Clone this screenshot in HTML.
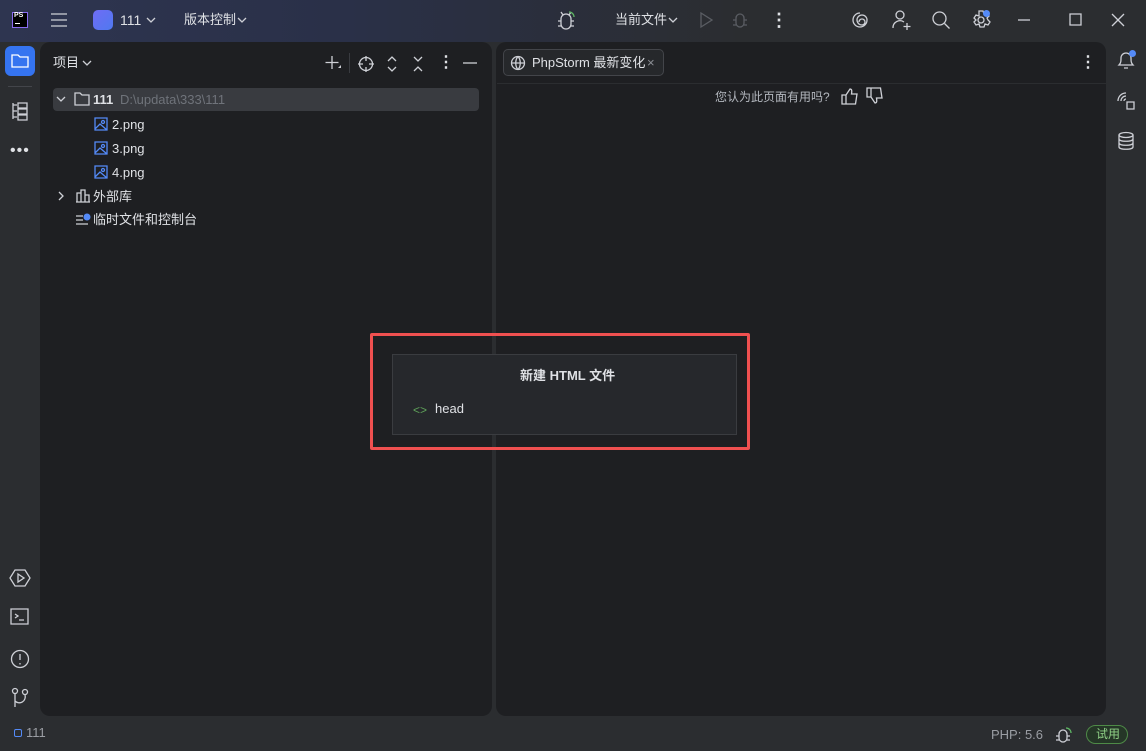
<!DOCTYPE html>
<html><head><meta charset="utf-8"><style>
*{margin:0;padding:0;box-sizing:border-box}
body{width:1146px;height:751px;background:#2b2d30;font-family:"Liberation Sans","Noto Sans CJK SC",sans-serif;color:#dfe1e5;font-size:13px;position:relative;overflow:hidden}
.abs{position:absolute}
#title{left:0;top:0;width:1146px;height:42px;background:linear-gradient(90deg,#2e3550 0%,#2a3048 30%,#2b2d30 65%)}
.panel{background:#1e1f22;border-radius:10px}
svg{position:absolute;fill:none;stroke:#ced0d6;stroke-width:1.3}
.t{position:absolute;white-space:nowrap;line-height:16px}
</style></head><body>
<div id="title" class="abs"></div>
<div class="abs" style="left:12px;top:12px;width:16px;height:16px;background:#000;border:1px solid #8a6cf0"></div>
<div class="t" style="left:14px;top:11px;font-size:7px;line-height:9px;color:#fff;font-weight:bold">PS</div>
<div class="abs" style="left:15px;top:23px;width:5px;height:1px;background:#fff"></div>
<svg style="left:50px;top:12px" width="18" height="16"><path d="M1 2h16M1 8h16M1 14h16"/></svg>
<div class="abs" style="left:93px;top:10px;width:20px;height:20px;border-radius:5px;background:linear-gradient(135deg,#6f6cf5,#4f79f0)"></div>
<div class="t" style="left:120px;top:12px;font-size:14px">111</div>
<svg style="left:146px;top:16px" width="10" height="8"><path d="M1 2l4 4 4-4"/></svg>
<div class="t" style="left:184px;top:12px;font-size:13px">版本控制</div>
<svg style="left:237px;top:16px" width="10" height="8"><path d="M1 2l4 4 4-4"/></svg>
<svg style="left:556px;top:9px" width="20" height="22"><path d="M5 10a5 5 0 0 1 10 0v5a5 5 0 0 1-10 0z M2 12h3M15 12h3M2 17h3M15 17h3M7 6l-2-3M13 6l2-3"/><path d="M13 3a5 5 0 0 1 5 5" stroke="#5fb865"/></svg>
<div class="t" style="left:615px;top:12px">当前文件</div>
<svg style="left:668px;top:16px" width="10" height="8"><path d="M1 2l4 4 4-4"/></svg>
<svg style="left:698px;top:11px" width="16" height="18"><path d="M3 2l11 7-11 7z" stroke="#5a5d63"/></svg>
<svg style="left:731px;top:10px" width="18" height="20"><path d="M5 8a4 4 0 0 1 8 0v5a4 4 0 0 1-8 0zM2 10h3M13 10h3M2 15h3M13 15h3" stroke="#5a5d63"/></svg>
<div class="t" style="left:770px;top:10px;font-size:18px;font-weight:bold;line-height:20px">⋮</div>
<svg style="left:850px;top:10px" width="20" height="20"><path d="M10 3a7 7 0 1 0 7 7 5 5 0 1 0-5 5 3 3 0 1 0-3-3"/></svg>
<svg style="left:891px;top:9px" width="22" height="22"><circle cx="9" cy="6" r="4"/><path d="M2 19a7 7 0 0 1 11-6M16 14v7M12.5 17.5h7"/></svg>
<svg style="left:931px;top:10px" width="20" height="20"><circle cx="8.5" cy="8.5" r="6.5"/><path d="M13.5 13.5l5 5"/></svg>
<svg style="left:970px;top:9px" width="22" height="22"><circle cx="11" cy="11" r="3"/><path d="M9 2h4l1 3 3-1 2 3-2 2 1 2 2 2-2 3-3-1-1 3h-4l-1-3-3 1-2-3 2-2-2-2 2-3 3 1z"/></svg>
<div class="abs" style="left:983px;top:10px;width:7px;height:7px;border-radius:50%;background:#548af7"></div>
<svg style="left:1016px;top:12px" width="16" height="16"><path d="M2 8h12"/></svg>
<svg style="left:1068px;top:12px" width="16" height="16"><path d="M2 2h11v11H2z"/></svg>
<svg style="left:1110px;top:12px" width="16" height="16"><path d="M2 2l12 12M14 2L2 14"/></svg>

<div class="abs" style="left:5px;top:46px;width:30px;height:30px;border-radius:6px;background:#3574f0"></div>
<svg style="left:10px;top:52px;stroke:#fff" width="20" height="18"><path d="M2 3h6l2 2h8v10H2z"/></svg>
<div class="abs" style="left:8px;top:86px;width:24px;height:1px;background:#43454a"></div>
<svg style="left:11px;top:101px" width="18" height="20"><path d="M2 2v16M2 4h4M2 10h4M2 16h4M7 2h9v5H7zM7 8h9v5H7zM7 14h9v5H7z"/></svg>
<div class="t" style="left:10px;top:143px;font-size:16px;letter-spacing:1px">•••</div>
<svg style="left:9px;top:567px" width="22" height="22"><path d="M6 3h10l5 8-5 8H6l-5-8z M9 7l6 4-6 4z"/></svg>
<svg style="left:10px;top:608px" width="20" height="18"><path d="M1 1h17v15H1zM5 6l3 2-3 2M9 12h5"/></svg>
<svg style="left:9px;top:648px" width="22" height="22"><circle cx="11" cy="11" r="8.5"/><path d="M11 6v6M11 15v1.5"/></svg>
<svg style="left:10px;top:687px" width="20" height="22"><circle cx="5" cy="4" r="2.5"/><circle cx="15" cy="5" r="2.5"/><path d="M5 7v13M15 8a6 6 0 0 1-10 6"/></svg>

<div class="abs panel" style="left:40px;top:42px;width:452px;height:674px"></div>
<div class="t" style="left:53px;top:55px;font-size:13px">项目</div>
<svg style="left:82px;top:59px" width="10" height="8"><path d="M1 2l4 4 4-4"/></svg>
<svg style="left:324px;top:54px" width="18" height="18"><path d="M8 2v13M1.5 8.5h13"/><path d="M14 14h3v-3z" fill="#ced0d6" stroke="none"/></svg>
<div class="abs" style="left:349px;top:53px;width:1px;height:20px;background:#393b40"></div>
<svg style="left:357px;top:55px" width="18" height="18"><circle cx="9" cy="9" r="6.5"/><path d="M9 1v5M9 12v5M1 9h5M12 9h5"/></svg>
<svg style="left:385px;top:55px" width="14" height="18"><path d="M3 6l4-4 4 4M3 12l4 4 4-4"/></svg>
<svg style="left:411px;top:55px" width="14" height="18"><path d="M3 2l4 4 4-4M3 16l4-4 4 4"/></svg>
<div class="t" style="left:438px;top:55px;font-size:16px;font-weight:bold">⋮</div>
<svg style="left:462px;top:55px" width="16" height="16"><path d="M1 8h14"/></svg>
<div class="abs" style="left:53px;top:88px;width:426px;height:23px;border-radius:4px;background:#393b40"></div>
<svg style="left:56px;top:95px" width="10" height="8"><path d="M1 2l4 4 4-4"/></svg>
<svg style="left:74px;top:92px" width="16" height="14"><path d="M1 1h5l2 2h7v10H1z"/></svg>
<div class="t" style="left:93px;top:92px;font-weight:bold">111</div>
<div class="t" style="left:120px;top:92px;color:#6f737a">D:\updata\333\111</div>
<svg style="left:94px;top:117px;stroke:#548af7" width="14" height="14"><path d="M1 1h12v12H1zM1 12l5-5 7 6"/><circle cx="9" cy="5" r="1.5"/></svg>
<div class="t" style="left:112px;top:117px">2.png</div>
<svg style="left:94px;top:141px;stroke:#548af7" width="14" height="14"><path d="M1 1h12v12H1zM1 12l5-5 7 6"/><circle cx="9" cy="5" r="1.5"/></svg>
<div class="t" style="left:112px;top:141px">3.png</div>
<svg style="left:94px;top:165px;stroke:#548af7" width="14" height="14"><path d="M1 1h12v12H1zM1 12l5-5 7 6"/><circle cx="9" cy="5" r="1.5"/></svg>
<div class="t" style="left:112px;top:165px">4.png</div>
<svg style="left:57px;top:191px" width="8" height="10"><path d="M2 1l4 4-4 4"/></svg>
<svg style="left:75px;top:189px" width="16" height="14"><path d="M1 13h14M2 13V4h4v9M6 13V1h4v12M10 13V6h4v7"/></svg>
<div class="t" style="left:93px;top:189px">外部库</div>
<svg style="left:75px;top:212px" width="16" height="16"><path d="M1 4h7M1 8h7M1 12h12"/><circle cx="12" cy="5" r="3.5" fill="#548af7" stroke="none"/></svg>
<div class="t" style="left:93px;top:212px">临时文件和控制台</div>

<div class="abs panel" style="left:496px;top:42px;width:610px;height:674px"></div>
<div class="abs" style="left:503px;top:49px;width:161px;height:27px;border:1px solid #43454a;border-radius:5px;background:#26282b"></div>
<svg style="left:510px;top:55px" width="16" height="16"><circle cx="8" cy="8" r="6.5"/><path d="M1.5 8h13M8 1.5c-3 3-3 10 0 13M8 1.5c3 3 3 10 0 13"/></svg>
<div class="t" style="left:532px;top:55px">PhpStorm 最新变化</div>
<div class="t" style="left:647px;top:55px;color:#8c8f95">×</div>
<div class="t" style="left:1080px;top:55px;font-size:16px;font-weight:bold">⋮</div>
<div class="abs" style="left:497px;top:83px;width:609px;height:1px;background:#2b2d30"></div>
<div class="t" style="left:715px;top:89px;color:#b4b8bf;font-size:12px">您认为此页面有用吗?</div>
<svg style="left:840px;top:87px" width="20" height="18"><path d="M2 8h4v9H2zM6 8l4-6c2 0 2 2 1.5 5h5.5l-1.5 10H6"/></svg>
<svg style="left:865px;top:87px" width="20" height="18"><path d="M2 1h4v9H2zM6 10l4 6c2 0 2-2 1.5-5h5.5l-1.5-10H6"/></svg>

<svg style="left:1115px;top:50px" width="22" height="22"><path d="M4 15c2-2 2-4 2-7a5 5 0 0 1 10 0c0 3 0 5 2 7zM9 18h4"/></svg>
<div class="abs" style="left:1129px;top:50px;width:7px;height:7px;border-radius:50%;background:#548af7"></div>
<svg style="left:1115px;top:90px" width="22" height="22"><path d="M11 3a8 8 0 0 0-8 8M11 6a5 5 0 0 0-5 5M11 9a2 2 0 0 0-2 2M12 12h7v7h-7z"/></svg>
<svg style="left:1116px;top:131px" width="20" height="20"><ellipse cx="10" cy="4" rx="7" ry="2.5"/><path d="M3 4v12c0 3 14 3 14 0V4M3 8c0 3 14 3 14 0M3 12c0 3 14 3 14 0"/></svg>

<div class="abs" style="left:370px;top:333px;width:380px;height:117px;border:3px solid #f05050;border-radius:2px"></div>
<div class="abs" style="left:392px;top:354px;width:345px;height:81px;background:#26282c;border:1px solid #3a3c40"></div>
<div class="t" style="left:520px;top:368px;font-weight:bold">新建 HTML 文件</div>
<div class="t" style="left:413px;top:402px;color:#5fa35a;font-size:12px">&lt;&gt;</div>
<div class="t" style="left:435px;top:401px">head</div>

<div class="abs" style="left:14px;top:729px;width:8px;height:8px;border:1.5px solid #548af7;border-radius:2px"></div>
<div class="t" style="left:26px;top:725px;color:#9a9da3">111</div>
<div class="t" style="left:991px;top:727px;color:#9a9da3;font-size:13px">PHP: 5.6</div>
<svg style="left:1054px;top:725px" width="20" height="20"><path d="M5 9a4 4 0 0 1 8 0v4a4 4 0 0 1-8 0zM2 11h3M13 11h3M2 15h3M13 15h3"/><path d="M12 3a5 5 0 0 1 5 5" stroke="#5fb865"/></svg>
<div class="abs" style="left:1086px;top:725px;width:42px;height:19px;border:1px solid #4e8a47;border-radius:10px;background:#253627"></div>
<div class="t" style="left:1096px;top:726px;color:#8fd086;font-size:12px">试用</div>
</body></html>
